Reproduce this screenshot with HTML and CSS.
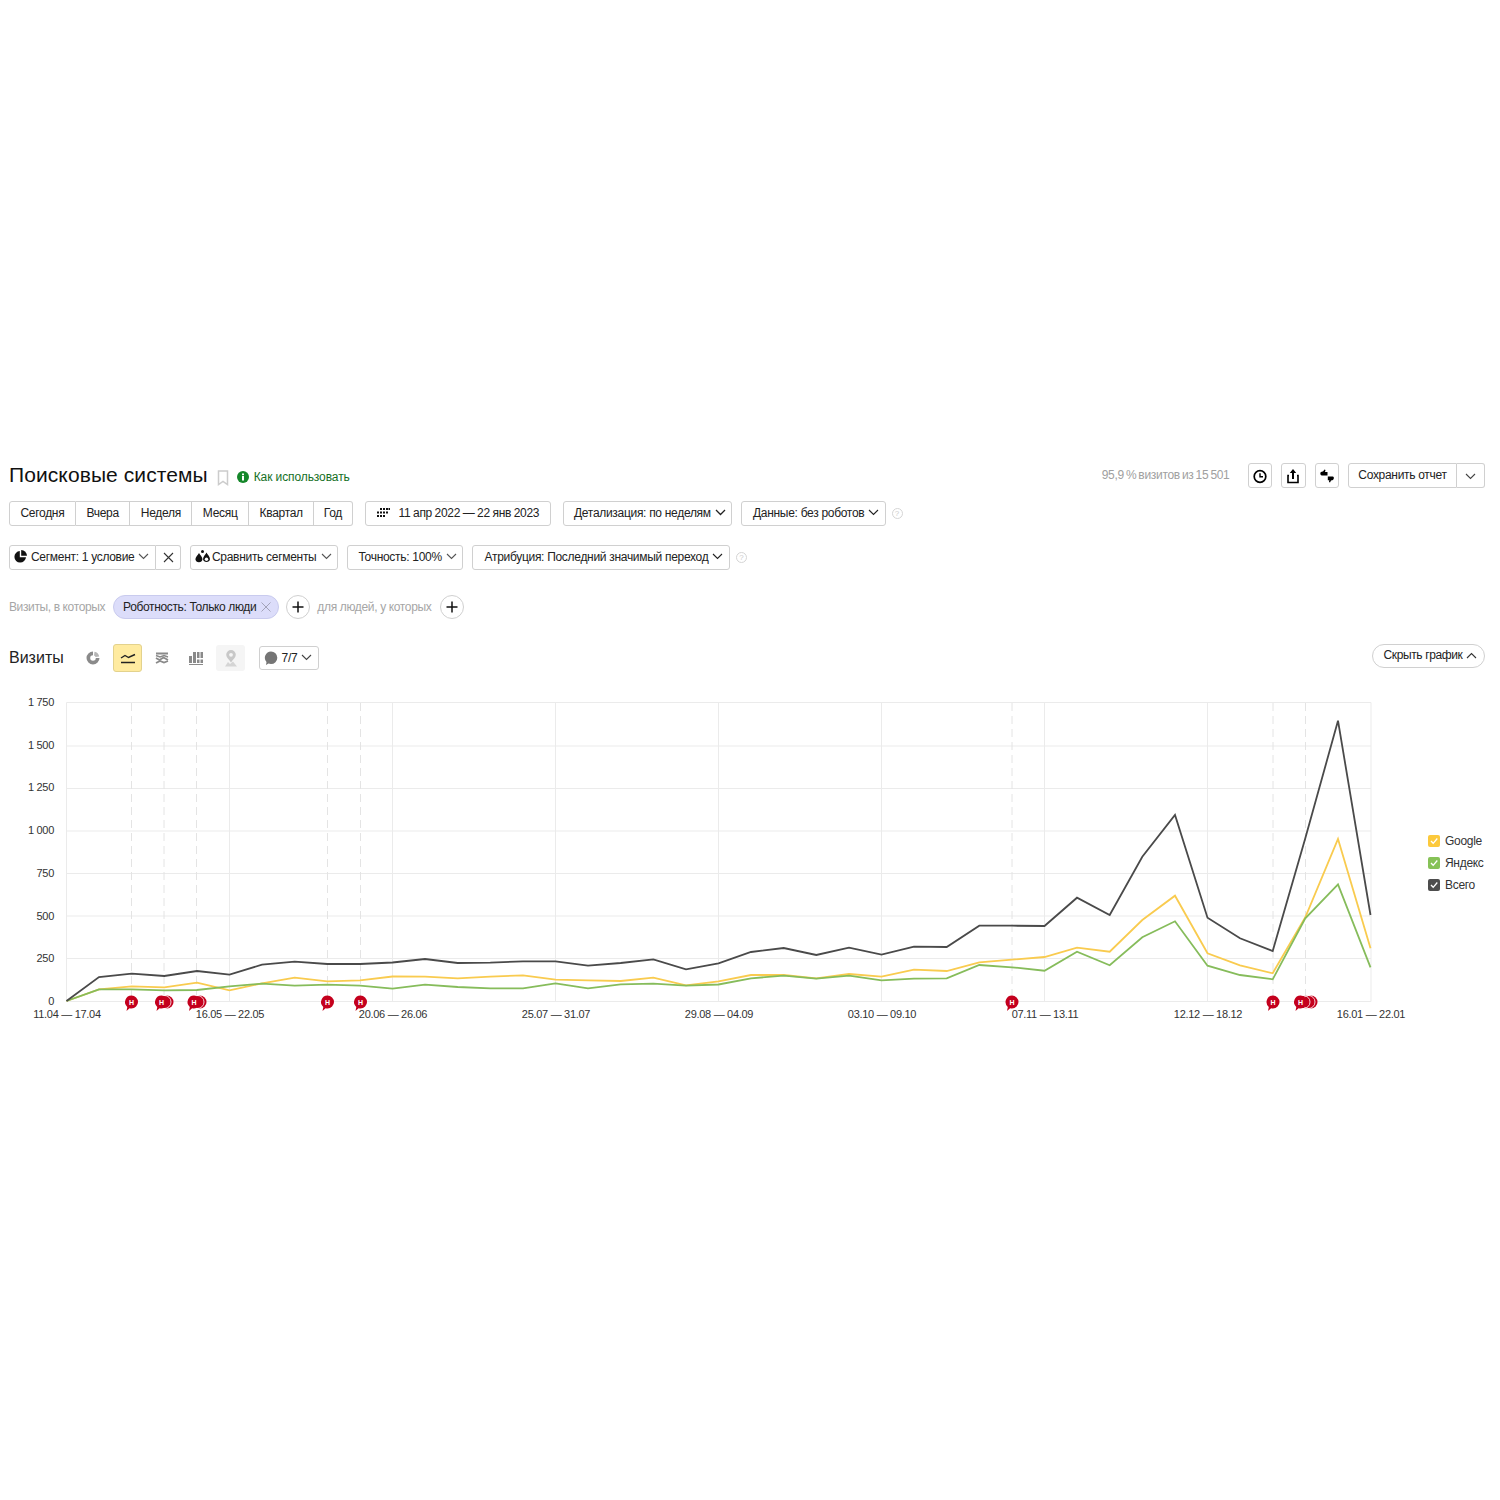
FILE: index.html
```html
<!DOCTYPE html>
<html lang="ru">
<head>
<meta charset="utf-8">
<title>Поисковые системы</title>
<link rel="stylesheet" href="styles.css">
</head>
<body>
<main class="page">
  <header class="head">
    <h1 class="title">Поисковые системы</h1>
    <svg class="bookmark" width="12" height="16" viewBox="0 0 12 16"><path d="M1.5 1h9v13.5L6 11.5 1.5 14.5z" fill="none" stroke="#ccc" stroke-width="1.5"/></svg>
    <a class="howto"><svg width="12" height="12" viewBox="0 0 12 12"><circle cx="6" cy="6" r="6" fill="#15872a"/><rect x="5" y="5" width="2" height="4.5" fill="#fff"/><rect x="5" y="2.5" width="2" height="1.7" fill="#fff"/></svg><span>Как использовать</span></a>
    <div class="head-right">
      <span class="sample">95,9 % визитов из 15 501</span>
      <button class="btn icon-btn"><svg width="16" height="16" viewBox="0 0 16 16"><circle cx="8" cy="8.5" r="5.8" fill="none" stroke="#000" stroke-width="1.7"/><path d="M8 5.2v3.5h3" fill="none" stroke="#000" stroke-width="1.4"/></svg></button>
      <button class="btn icon-btn"><svg width="16" height="16" viewBox="0 0 16 16"><path d="M8 1 11.2 5H9v6H7V5H4.800z" fill="#000"/><path d="M4 7.500H3v7h10v-7h-1M3 14.500" fill="none" stroke="#000" stroke-width="1.600"/></svg></button>
      <button class="btn icon-btn"><svg width="16" height="16" viewBox="0 0 16 16"><path d="M1.500 4.500C2 3.500 3.500 3.500 4 3.500L5.500 1.500 6.500 2 6 4h2.500v3.500H3C1.500 7.500 1 5.800 1.500 4.500z" fill="#000"/><path d="M8.800 8.500h5c.8 0 1.300 1 1 2-.3 1-1 2-2.800 2L11 14.500 10 14l.300-1.800H8.800z" fill="#000"/></svg></button>
      <div class="group save-group">
        <button class="btn seg save">Сохранить отчет</button>
        <button class="btn seg save-more"><svg class="chev" width="11" height="7" viewBox="0 0 11 7"><path d="M1 1l4.500 4.500L10 1" fill="none" stroke="#444" stroke-width="1.100"/></svg></button>
      </div>
    </div>
  </header>

  <div class="row row-period">
    <div class="group">
      <button class="btn seg period">Сегодня</button>
      <button class="btn seg period">Вчера</button>
      <button class="btn seg period">Неделя</button>
      <button class="btn seg period">Месяц</button>
      <button class="btn seg period">Квартал</button>
      <button class="btn seg period">Год</button>
    </div>
    <button class="btn date">
      <svg width="14" height="10" viewBox="0 0 14 10" fill="#111"><rect x="4" y="0" width="2" height="2"/><rect x="7" y="0" width="2" height="2"/><rect x="10" y="0" width="2" height="2"/><rect x="12.500" y="0" width="1.500" height="2"/><rect x="1" y="3.500" width="2" height="2"/><rect x="4" y="3.500" width="2" height="2"/><rect x="7" y="3.500" width="2" height="2"/><rect x="10" y="3.500" width="2" height="2"/><rect x="1" y="7" width="2" height="2"/><rect x="4" y="7" width="2" height="2"/><rect x="7" y="7" width="2" height="2"/></svg>
      <span>11 апр 2022 — 22 янв 2023</span>
    </button>
    <button class="btn select detail">Детализация: по неделям<svg class="chev" width="11" height="7" viewBox="0 0 11 7"><path d="M1 1l4.500 4.500L10 1" fill="none" stroke="#222" stroke-width="1.300"/></svg></button>
    <button class="btn select data">Данные: без роботов<svg class="chev" width="11" height="7" viewBox="0 0 11 7"><path d="M1 1l4.500 4.500L10 1" fill="none" stroke="#222" stroke-width="1.100"/></svg></button>
    <span class="hint">?</span>
  </div>

  <div class="row row-segment">
    <div class="group">
      <button class="btn seg segment">
        <svg width="13" height="13" viewBox="0 0 13 13"><path d="M5.800 1A5.800 5.800 0 1 0 12 7.200H5.800z" fill="#111"/><path d="M7.200 0A5.800 5.800 0 0 1 13 5.800H7.200z" fill="#111"/></svg>
        <span>Сегмент: 1 условие</span>
        <svg class="chev" width="11" height="7" viewBox="0 0 11 7"><path d="M1 1l4.500 4.500L10 1" fill="none" stroke="#555" stroke-width="1.100"/></svg>
      </button>
      <button class="btn seg clear"><svg width="11" height="11" viewBox="0 0 11 11"><path d="M1 1l9 9M10 1l-9 9" stroke="#333" stroke-width="1.100"/></svg></button>
    </div>
    <button class="btn compare">
      <svg width="15" height="13" viewBox="0 0 15 13" fill="#111"><path d="M4 3C5 5 7.500 7 7.500 9.300A3.600 3.600 0 0 1 .4 9.300C.4 7 3 5 4 3z"/><circle cx="7.500" cy="1.500" r="1.500"/><path d="M11.500 2.500C12.300 4.500 15 6.500 15 9.200A3.600 3.600 0 0 1 8 9.200C8 6.500 10.700 4.500 11.500 2.500z"/><circle cx="11.500" cy="9.200" r="1.700" fill="#fff"/></svg>
      <span>Сравнить сегменты</span>
      <svg class="chev" width="11" height="7" viewBox="0 0 11 7"><path d="M1 1l4.500 4.500L10 1" fill="none" stroke="#555" stroke-width="1.100"/></svg>
    </button>
    <button class="btn select accuracy">Точность: 100%<svg class="chev" width="11" height="7" viewBox="0 0 11 7"><path d="M1 1l4.500 4.500L10 1" fill="none" stroke="#555" stroke-width="1.100"/></svg></button>
    <button class="btn select attribution">Атрибуция: Последний значимый переход<svg class="chev" width="11" height="7" viewBox="0 0 11 7"><path d="M1 1l4.500 4.500L10 1" fill="none" stroke="#222" stroke-width="1.100"/></svg></button>
    <span class="hint">?</span>
  </div>

  <div class="row row-filter">
    <span class="filter-label">Визиты, в которых</span>
    <span class="chip">Роботность: Только люди<svg width="10" height="10" viewBox="0 0 10 10"><path d="M.5.5l9 9M9.500.5l-9 9" stroke="#a3a3b8" stroke-width="1"/></svg></span>
    <button class="plus"><svg width="12" height="12" viewBox="0 0 12 12"><path d="M6 .5v11M.5 6h11" stroke="#111" stroke-width="1.500"/></svg></button>
    <span class="filter-label second">для людей, у которых</span>
    <button class="plus"><svg width="12" height="12" viewBox="0 0 12 12"><path d="M6 .5v11M.5 6h11" stroke="#111" stroke-width="1.500"/></svg></button>
  </div>

  <div class="row row-chart-tools">
    <h2 class="metric">Визиты</h2>
    <div class="tool"><svg width="14" height="14" viewBox="0 0 14 14"><path d="M7 .5a6.500 6.500 0 1 0 6.500 6.500H9.800A2.800 2.800 0 1 1 7 4.200z" fill="#8a8a8a"/><path d="M8.500.8a6 6 0 0 1 4.700 4.700L9.500 6A3 3 0 0 0 8 4.500z" fill="#b5b5b5"/></svg></div>
    <div class="tool tool-active"><svg width="16" height="12" viewBox="0 0 16 12"><path d="M1 6l4-2.500 3.500 2L15 2.500" fill="none" stroke="#222" stroke-width="1.400"/><path d="M1 10.500h14" stroke="#222" stroke-width="1.500"/></svg></div>
    <div class="tool"><svg width="14" height="14" viewBox="0 0 14 14" fill="none" stroke="#8a8a8a" stroke-width="1.800"><path d="M1 2.500h12M1 7l3.500 2 4-2.500L13 9"/><path d="M1 12l4-2 4 1.500 4-1.500"/><path d="M1 4.500l4 1.500 4-1.500 4 1.500" stroke-width="1.400"/></svg></div>
    <div class="tool"><svg width="14" height="14" viewBox="0 0 14 14" fill="#8a8a8a"><rect x="0" y="5" width="3" height="7"/><rect x="4" y="1" width="3" height="11"/><rect x="8" y="1" width="2.500" height="6"/><rect x="8" y="8.500" width="2.500" height="3.500"/><rect x="11.500" y="1" width="2.500" height="6"/><rect x="11.500" y="8.500" width="2.500" height="3.500"/><rect x="0" y="13" width="14" height="1"/></svg></div>
    <div class="tool tool-off"><svg width="14" height="17" viewBox="0 0 14 17"><path d="M7 0a4.800 4.800 0 0 1 4.800 4.800C11.800 7.500 9 9.500 7 12.500 5 9.500 2.200 7.500 2.200 4.800A4.800 4.800 0 0 1 7 0z" fill="#c8c8c8"/><circle cx="7" cy="4.800" r="1.900" fill="#f5f5f5"/><path d="M1 16.500l3-4.500 2 2 3-2.500 4 5z" fill="#d5d5d5"/></svg></div>
    <button class="btn notes"><svg width="14" height="14" viewBox="0 0 14 14"><path d="M7 .5a6.300 6.300 0 0 1 0 12.600c-1 0-1.800-.2-2.500-.5L2 14l.5-3A6.300 6.300 0 0 1 7 .5z" fill="#757575"/></svg><span>7/7</span><svg class="chev" width="11" height="7" viewBox="0 0 11 7"><path d="M1 1l4.500 4.500L10 1" fill="none" stroke="#444" stroke-width="1.100"/></svg></button>
    <button class="btn hide-chart">Скрыть график<svg class="chev" width="11" height="7" viewBox="0 0 11 7"><path d="M1 6l4.500-4.500L10 6" fill="none" stroke="#333" stroke-width="1.100"/></svg></button>
  </div>

  <section class="chart">
    <svg class="plot" width="1411" height="340" viewBox="9 690 1411 340">
      <g class="grid">
        <path d="M66.500 702.500H1371M66.500 746H1371M66.500 788.500H1371M66.500 831H1371M66.500 873.500H1371M66.500 916H1371M66.500 958.500H1371M66.500 1001.500H1371"/>
        <path d="M66.500 702.500V1001.500M229.500 702.500V1001.500M392.500 702.500V1001.500M555.500 702.500V1001.500M718.500 702.500V1001.500M881.500 702.500V1001.500M1044.500 702.500V1001.500M1207.500 702.500V1001.500M1371 702.500V1001.500"/>
      </g>
      <path class="marks" d="M131.500 703V1001M164 703V1001M196.500 703V1001M327.500 703V1001M360.500 703V1001M1012 703V1001M1273 703V1001M1305.500 703V1001"/>
      <polyline class="line yellow" points="66.500,1001 99,989.300 131.700,986.300 164.300,987.300 197,982.700 229.500,990.300 262,983.300 294.700,977.700 327.300,981.300 360,980.300 392.500,976.500 425,976.700 457.700,978.300 490.300,976.700 523,975.300 555.500,979.700 588,980.300 620.700,981 653.300,977.700 686,985.300 718.500,981.300 751,975 783.700,975 816.300,978.300 849,974 881.500,976.700 914,969.700 946.700,971 979.300,962.300 1012,959.700 1044.500,957 1077,947.700 1109.700,951.700 1142.300,920 1175,895.700 1207.500,953.300 1240,965.300 1272.700,973.300 1305.300,917.300 1338,839 1370.500,948.300"/>
      <polyline class="line green" points="66.500,1001 99,989.300 131.700,989.300 164.300,990.300 197,990 229.500,986.300 262,983.700 294.700,985.700 327.300,984.700 360,985.700 392.500,988.700 425,984.700 457.700,987 490.300,988.300 523,988.300 555.500,983.300 588,988.300 620.700,984.300 653.300,983.700 686,985.700 718.500,984.500 751,978.300 783.700,975.700 816.300,978.700 849,975.700 881.500,980.300 914,978.700 946.700,978.300 979.300,965 1012,967.300 1044.500,970.700 1077,951.700 1109.700,965.300 1142.300,937.300 1175,921.300 1207.500,965.700 1240,975 1272.700,979.300 1305.300,918.300 1338,884.300 1370.500,967.300"/>
      <polyline class="line dark" points="66.500,1001 99,977 131.700,973.700 164.300,976 197,971 229.500,974.700 262,964.700 294.700,961.700 327.300,964 360,964 392.500,962.500 425,959 457.700,963 490.300,962.700 523,961.300 555.500,961.300 588,965.700 620.700,963 653.300,959.300 686,969.300 718.500,963.300 751,952 783.700,948 816.300,955 849,947.700 881.500,954.700 914,946.700 946.700,947 979.300,925.700 1012,925.700 1044.500,926 1077,897.700 1109.700,915 1142.300,856.700 1175,815 1207.500,917.700 1240,938.300 1272.700,951 1305.300,838.300 1338,720.700 1370.500,915"/>
      <g class="notes-back">
        <circle cx="167" cy="1002" r="6.500"/><circle cx="200" cy="1002" r="6.500"/><circle cx="1311" cy="1002" r="6.500"/><circle cx="1306" cy="1002" r="6.500"/>
      </g>
      <g class="notes-white">
        <circle cx="164.500" cy="1002" r="6.500"/><circle cx="197.500" cy="1002" r="6.500"/><circle cx="1308.500" cy="1002" r="6.500"/><circle cx="1303.500" cy="1002" r="6.500"/>
      </g>
      <g class="note-pins">
        <path d="M131.500 995.500a6.500 6.500 0 0 1 0 13c-.7 0-1.300-.1-1.900-.3L126.500 1011l.8-4.100a6.500 6.500 0 0 1 4.200-11.400z"/>
        <path d="M161.500 995.500a6.500 6.500 0 0 1 0 13c-.7 0-1.300-.1-1.900-.3L156.500 1011l.8-4.100a6.500 6.500 0 0 1 4.200-11.400z"/>
        <path d="M194 995.500a6.500 6.500 0 0 1 0 13c-.7 0-1.300-.1-1.900-.3L189 1011l.8-4.100a6.500 6.500 0 0 1 4.200-11.400z"/>
        <path d="M327.500 995.500a6.500 6.500 0 0 1 0 13c-.7 0-1.300-.1-1.900-.3L322.500 1011l.8-4.100a6.500 6.500 0 0 1 4.200-11.400z"/>
        <path d="M360.500 995.500a6.500 6.500 0 0 1 0 13c-.7 0-1.300-.1-1.900-.3L355.500 1011l.8-4.100a6.500 6.500 0 0 1 4.200-11.400z"/>
        <path d="M1012 995.500a6.500 6.500 0 0 1 0 13c-.7 0-1.300-.1-1.900-.3L1007 1011l.8-4.100a6.500 6.500 0 0 1 4.200-11.400z"/>
        <path d="M1273 995.500a6.500 6.500 0 0 1 0 13c-.7 0-1.300-.1-1.900-.3L1268 1011l.8-4.100a6.500 6.500 0 0 1 4.200-11.400z"/>
        <path d="M1300.500 995.500a6.500 6.500 0 0 1 0 13c-.7 0-1.300-.1-1.900-.3L1295.500 1011l.8-4.100a6.500 6.500 0 0 1 4.200-11.400z"/>
      </g>
      <g class="note-text">
        <text x="131.500" y="1004.500">Н</text><text x="161.500" y="1004.500">Н</text><text x="194" y="1004.500">Н</text><text x="327.500" y="1004.500">Н</text><text x="360.500" y="1004.500">Н</text><text x="1012" y="1004.500">Н</text><text x="1273" y="1004.500">Н</text><text x="1300.500" y="1004.500">Н</text>
      </g>
      <g class="y-labels">
        <text x="54" y="706">1 750</text><text x="54" y="749">1 500</text><text x="54" y="791">1 250</text><text x="54" y="834">1 000</text><text x="54" y="877">750</text><text x="54" y="920">500</text><text x="54" y="962">250</text><text x="54" y="1005">0</text>
      </g>
      <g class="x-labels">
        <text x="67" y="1018">11.04 — 17.04</text><text x="230" y="1018">16.05 — 22.05</text><text x="393" y="1018">20.06 — 26.06</text><text x="556" y="1018">25.07 — 31.07</text><text x="719" y="1018">29.08 — 04.09</text><text x="882" y="1018">03.10 — 09.10</text><text x="1045" y="1018">07.11 — 13.11</text><text x="1208" y="1018">12.12 — 18.12</text><text x="1371" y="1018">16.01 — 22.01</text>
      </g>
    </svg>
    <ul class="legend">
      <li class="legend-item"><span class="box box-yellow"><svg width="12" height="12" viewBox="0 0 12 12"><path d="M3 6l2.200 2.300L9.300 3.500" fill="none" stroke="#fff" stroke-width="1.300"/></svg></span>Google</li>
      <li class="legend-item"><span class="box box-green"><svg width="12" height="12" viewBox="0 0 12 12"><path d="M3 6l2.200 2.300L9.300 3.500" fill="none" stroke="#fff" stroke-width="1.300"/></svg></span>Яндекс</li>
      <li class="legend-item"><span class="box box-dark"><svg width="12" height="12" viewBox="0 0 12 12"><path d="M3 6l2.200 2.300L9.300 3.500" fill="none" stroke="#fff" stroke-width="1.300"/></svg></span>Всего</li>
    </ul>
  </section>
</main>
</body>
</html>
```

FILE: styles.css
```css
* { box-sizing: border-box; }
html, body { margin: 0; background: #fff; }
body { font-family: "Liberation Sans", Arial, sans-serif; font-size: 12px; color: #222; }
.page { padding: 463px 15px 0 9px; min-height: 1500px; }

.head { display: flex; align-items: center; height: 25px; }
.title { margin: -2px 0 0; font-size: 21px; font-weight: 400; letter-spacing: .09px; color: #111; line-height: 25px; }
.bookmark { margin-left: 9px; margin-top: 4px; }
.howto { display: flex; align-items: center; gap: 5px; margin-left: 8px; margin-top: 3px; color: #15701f; letter-spacing: -.1px; }
.head-right { margin-left: auto; display: flex; align-items: center; }
.sample { color: #a0a0a0; margin-right: 18px; letter-spacing: -.3px; word-spacing: -1px; margin-top: -1px; }

.btn { display: inline-flex; align-items: center; justify-content: center; height: 25px; padding: 0 0 2px; margin: 0; font: inherit; letter-spacing: -.3px; color: #222; background: #fff; border: 1px solid #d0d0d0; border-radius: 3px; white-space: nowrap; }
.icon-btn { width: 24.500px; margin-right: 9px; padding: 0; }
.group { display: flex; }
.seg { border-radius: 0; border-left-width: 0; }
.seg:first-child { border-left-width: 1px; border-radius: 3px 0 0 3px; }
.seg:last-child { border-radius: 0 3px 3px 0; }
.save { width: 109px; }
.save-more { width: 28px; padding: 0; }
.save-more .chev { margin: 1px 0 0; }

.row { display: flex; align-items: center; }
.row-period { margin-top: 13px; }
.row-segment { margin-top: 19px; }
.row-filter { margin-top: 25px; height: 24px; }
.row-chart-tools { margin-top: 25px; height: 28px; }

.period { padding: 0 10.500px 2px; }
.period:last-child { padding: 0 9.500px 2px; }
.date { width: 186px; margin-left: 12px; gap: 9px; justify-content: flex-start; padding-left: 10px; word-spacing: -.4px; }
.select { padding: 0 0 2px 10.500px; justify-content: flex-start; }
.chev { margin-left: 4px; flex: none; }
.detail { width: 169px; margin-left: 12px; }
.data { width: 145px; margin-left: 9px; padding-left: 11.500px; }
.hint { width: 11px; height: 11px; margin-left: 6px; border: 1px solid #d5d5d5; border-radius: 50%; color: #ccc; font-size: 8px; line-height: 9px; text-align: center; }

.segment { width: 147px; gap: 4px; padding: 0 0 2px 4px; justify-content: flex-start; }
.segment .chev { margin-left: 0; }
.clear { width: 25px; padding: 0; }
.compare { width: 148px; margin-left: 9px; gap: 2px; padding: 0 0 2px 4px; justify-content: flex-start; }
.compare .chev { margin-left: 3px; }
.accuracy { width: 116px; margin-left: 9px; }
.attribution { width: 258px; margin-left: 9px; padding-left: 11.500px; }

.filter-label { color: #a6a6a6; letter-spacing: -.38px; margin-top: -1px; }
.chip { display: inline-flex; align-items: center; gap: 5px; height: 24px; margin-left: 8px; padding: 0 7px 0 9px; background: #dcddfa; border: 1px solid #c9cbee; border-radius: 12px; color: #222; letter-spacing: -.36px; }
.plus { display: inline-flex; align-items: center; justify-content: center; width: 24px; height: 24px; margin: 0 0 0 7px; padding: 0; background: #fff; border: 1px solid #d0d0d0; border-radius: 50%; }
.second { margin-left: 7px; letter-spacing: -.35px; }
.plus:last-child { margin-left: 9px; }

.metric { margin: 0; font-size: 16px; font-weight: 400; color: #222; width: 55px; }
.tool { display: flex; align-items: center; justify-content: center; width: 29px; height: 28px; margin-left: 5px; }
.metric + .tool { margin-left: 14px; }
.tool-active { margin-left: 6px; background: #ffeba0; border: 1px solid #e3d28d; border-radius: 3px; }
.tool-off { height: 26px; margin-left: 6px; background: #f5f5f5; border-radius: 3px; }
.notes { width: 60px; height: 24px; margin-left: 14px; gap: 4px; padding: 0 2px 1px 0; }
.notes .chev { margin-left: 0; }
.hide-chart { margin-left: auto; align-self: flex-start; width: 113px; height: 24px; padding: 0 0 2px 4px; border-radius: 12px; letter-spacing: -.38px; }

.chart { display: flex; align-items: center; margin-top: 18px; }
.plot { display: block; flex: none; }
.grid path { fill: none; stroke: #ebebeb; stroke-width: 1; }
.marks { fill: none; stroke: #e4e4e4; stroke-width: 1; stroke-dasharray: 8 5; }
.line { fill: none; stroke-width: 1.800; stroke-linejoin: miter; }
.yellow { stroke: #f9cb4f; }
.green { stroke: #86bc5b; }
.dark { stroke: #4a4a4a; }
.notes-back circle, .note-pins path { fill: #c4001d; }
.notes-white circle { fill: none; stroke: #fff; stroke-width: .8; }
.note-text text { fill: #fff; font-size: 7px; font-weight: 700; text-anchor: middle; }
.y-labels text { fill: #333; font-size: 11px; letter-spacing: -.3px; text-anchor: end; }
.x-labels text { fill: #333; font-size: 11px; letter-spacing: -.3px; text-anchor: middle; }

.legend { list-style: none; margin: 5px 0 0 8px; padding: 0; display: flex; flex-direction: column; gap: 6px; letter-spacing: -.3px; }
.legend-item { display: flex; align-items: center; gap: 5px; height: 16px; color: #333; }
.box { display: block; width: 12px; height: 12px; border-radius: 2px; }
.box svg { display: block; }
.box-yellow { background: #fcc93c; }
.box-green { background: #86c257; }
.box-dark { background: #4d4d4d; }
```
